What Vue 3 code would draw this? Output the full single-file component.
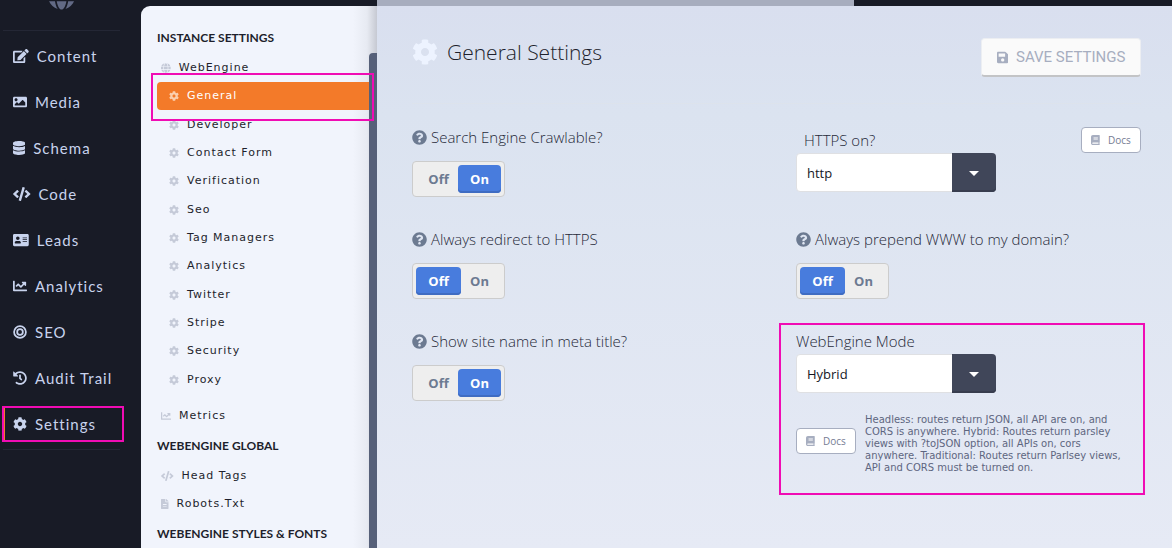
<script setup>
import { ref, h } from 'vue'

const icons = {
  cog: [512, 'M487.4 315.7l-42.6-24.6c4.3-23.2 4.3-47 0-70.2l42.6-24.6c4.9-2.8 7.1-8.6 5.5-14-11.1-35.6-30-67.8-54.7-94.6-3.8-4.1-10-5.1-14.8-2.3L380.8 110c-17.9-15.4-38.5-27.3-60.8-35.1V25.8c0-5.6-3.9-10.5-9.4-11.7-36.7-8.2-74.3-7.8-109.2 0-5.5 1.2-9.4 6.1-9.4 11.7V75c-22.2 7.9-42.8 19.8-60.8 35.1L88.7 85.5c-4.9-2.8-11-1.9-14.8 2.3-24.7 26.7-43.6 58.9-54.7 94.6-1.7 5.4.6 11.2 5.5 14L67.3 221c-4.3 23.2-4.3 47 0 70.2l-42.6 24.6c-4.9 2.8-7.1 8.6-5.5 14 11.1 35.6 30 67.8 54.7 94.6 3.8 4.1 10 5.1 14.8 2.3l42.6-24.6c17.9 15.4 38.5 27.3 60.8 35.1v49.2c0 5.6 3.9 10.5 9.4 11.7 36.7 8.2 74.3 7.8 109.2 0 5.5-1.2 9.4-6.1 9.4-11.7v-49.2c22.2-7.9 42.8-19.8 60.8-35.1l42.6 24.6c4.9 2.8 11 1.9 14.8-2.3 24.7-26.7 43.6-58.9 54.7-94.6 1.5-5.5-.7-11.3-5.6-14.1zM256 336c-44.1 0-80-35.9-80-80s35.9-80 80-80 80 35.9 80 80-35.9 80-80 80z'],
  edit: [576, 'M402.6 83.2l90.2 90.2c3.8 3.8 3.8 10 0 13.8L274.4 405.6l-92.8 10.3c-12.4 1.4-22.9-9.1-21.5-21.5l10.3-92.8L388.8 83.2c3.8-3.8 10-3.8 13.8 0zm162-22.9l-48.8-48.8c-15.2-15.2-39.9-15.2-55.2 0l-35.4 35.4c-3.8 3.8-3.8 10 0 13.8l90.2 90.2c3.8 3.8 10 3.8 13.8 0l35.4-35.4c15.2-15.3 15.2-40 0-55.2zM384 346.2V448H64V128h229.8c3.2 0 6.2-1.3 8.5-3.5l40-40c7.6-7.6 2.2-20.5-8.5-20.5H48C21.5 64 0 85.5 0 112v352c0 26.5 21.5 48 48 48h352c26.5 0 48-21.5 48-48V306.2c0-10.7-12.9-16-20.5-8.5l-40 40c-2.2 2.3-3.5 5.3-3.5 8.5z'],
  image: [512, 'M464 448H48c-26.5 0-48-21.5-48-48V112c0-26.5 21.5-48 48-48h416c26.5 0 48 21.5 48 48v288c0 26.5-21.5 48-48 48zM112 120c-30.9 0-56 25.1-56 56s25.1 56 56 56 56-25.1 56-56-25.1-56-56-56zM64 384h384V272l-87.5-87.5c-4.7-4.7-12.3-4.7-17 0L208 320l-55.5-55.5c-4.7-4.7-12.3-4.7-17 0L64 336v48z'],
  database: [448, 'M448 73.1v45.7C448 159.1 347.7 192 224 192S0 159.1 0 118.9V73.1C0 32.9 100.3 0 224 0s224 32.9 224 73.1zM448 176v102.9C448 319.1 347.7 352 224 352S0 319.1 0 278.9V176c48.1 33.1 136.2 48.6 224 48.6S399.9 209.1 448 176zm0 160v102.9C448 479.1 347.7 512 224 512S0 479.1 0 438.9V336c48.1 33.1 136.2 48.6 224 48.6S399.9 369.1 448 336z'],
  code: [640, 'M278.9 511.5l-61-17.7c-6.4-1.8-10-8.5-8.2-14.9L346.2 8.7c1.8-6.4 8.5-10 14.9-8.2l61 17.7c6.4 1.8 10 8.5 8.2 14.9L293.8 503.3c-1.9 6.4-8.5 10.1-14.9 8.2zm-114-112.2l43.5-46.4c4.6-4.9 4.3-12.7-.8-17.2L117 256l90.6-79.7c5.1-4.5 5.5-12.3.8-17.2l-43.5-46.4c-4.5-4.8-12.1-5.1-17-.5L3.8 247.2c-5.1 4.7-5.1 12.8 0 17.5l144.1 135.1c4.9 4.6 12.5 4.4 17-.5zm327.2.6l144.1-135.1c5.1-4.7 5.1-12.8 0-17.5L492.1 112.1c-4.8-4.5-12.4-4.3-17 .5L431.6 159c-4.6 4.9-4.3 12.7.8 17.2L523 256l-90.6 79.7c-5.1 4.5-5.5 12.3-.8 17.2l43.5 46.4c4.5 4.9 12.1 5.1 17 .6z'],
  card: [576, 'M528 32H48C21.5 32 0 53.5 0 80v352c0 26.5 21.5 48 48 48h480c26.5 0 48-21.5 48-48V80c0-26.5-21.5-48-48-48zm-352 96c35.3 0 64 28.7 64 64s-28.7 64-64 64-64-28.7-64-64 28.7-64 64-64zm112 236.800c0 10.600-10 19.200-22.400 19.200H86.400C74 384 64 375.400 64 364.800v-19.200c0-31.800 30.100-57.600 67.200-57.600h5c12.300 5.100 25.700 8 39.800 8s27.600-2.900 39.800-8h5c37.100 0 67.200 25.800 67.200 57.600v19.200zM512 312c0 4.400-3.600 8-8 8H360c-4.400 0-8-3.600-8-8v-16c0-4.400 3.600-8 8-8h144c4.400 0 8 3.600 8 8v16zm0-64c0 4.400-3.600 8-8 8H360c-4.400 0-8-3.600-8-8v-16c0-4.400 3.600-8 8-8h144c4.400 0 8 3.600 8 8v16zm0-64c0 4.400-3.600 8-8 8H360c-4.400 0-8-3.600-8-8v-16c0-4.400 3.600-8 8-8h144c4.400 0 8 3.600 8 8v16z'],
  chart: [512, 'M496 384H64V80c0-8.800-7.200-16-16-16H16C7.200 64 0 71.200 0 80v336c0 17.700 14.300 32 32 32h464c8.800 0 16-7.200 16-16v-32c0-8.800-7.200-16-16-16zM464 96H345.900c-21.400 0-32.100 25.900-17 41l32.400 32.400L288 242.800l-73.400-73.400c-12.500-12.500-32.800-12.500-45.300 0l-68.700 68.700c-6.200 6.200-6.200 16.400 0 22.600l22.600 22.600c6.300 6.300 16.400 6.300 22.700 0L192 237.300l73.400 73.300c12.500 12.500 32.800 12.500 45.300 0l96-96 32.300 32.400c15.100 15.100 41 4.400 41-17V112c0-8.800-7.200-16-16-16z'],
  bullseye: [512, 'M256 8a248 248 0 1 0 0 496a248 248 0 1 0 0-496zm0 432a184 184 0 1 1 0-368a184 184 0 1 1 0 368zm0-320a136 136 0 1 0 0 272a136 136 0 1 0 0-272zm0 208a72 72 0 1 1 0-144a72 72 0 1 1 0 144z'],
  history: [512, 'M504 255.500c.3 136.600-111.200 248.400-247.800 248.500-59 0-113.200-20.500-155.800-54.900-11.100-8.900-11.900-25.500-1.900-35.600l11.300-11.300c8.600-8.600 22.400-9.600 31.900-2C173.100 425.100 212.800 440 256 440c101.700 0 184-82.300 184-184 0-101.700-82.300-184-184-184-48.800 0-93.100 19-126.100 49.900l50.800 50.800c10.100 10.100 2.900 27.300-11.300 27.300H24c-8.800 0-16-7.200-16-16V38.600c0-14.300 17.200-21.400 27.300-11.300l49.400 49.400C129.200 34.100 189.600 8 256 8c136.800 0 247.700 110.800 248 247.500zm-180.900 78.800l9.800-12.600c8.100-10.500 6.300-25.500-4.200-33.700L288 256.300V152c0-13.300-10.700-24-24-24h-16c-13.300 0-24 10.700-24 24v135.700l65.400 50.900c10.500 8.100 25.500 6.300 33.700-4.300z'],
  globe: [496, 'M336.500 160C322 70.700 287.800 8 248 8s-74 62.700-88.500 152h177zM152 256c0 22.200 1.200 43.500 3.300 64h185.300c2.100-20.500 3.300-41.800 3.300-64s-1.200-43.500-3.300-64H155.300c-2.100 20.500-3.300 41.800-3.300 64zm324.700-96c-28.600-67.900-86.500-120.400-158-141.600 24.400 33.800 41.200 84.700 50 141.600h108zM177.200 18.400C105.800 39.600 47.800 92.100 19.300 160h108c8.700-56.900 25.500-107.800 49.900-141.600zM487.400 192H372.700c2.100 21 3.300 42.500 3.300 64s-1.200 43-3.300 64h114.600c5.500-20.500 8.600-41.800 8.600-64s-3.100-43.500-8.500-64zM120 256c0-21.500 1.200-43 3.300-64H8.600C3.200 212.500 0 233.800 0 256s3.200 43.500 8.600 64h114.600c-2-21-3.200-42.500-3.200-64zm39.500 96c14.500 89.300 48.700 152 88.500 152s74-62.700 88.500-152h-177zm159.300 141.600c71.400-21.200 129.400-73.700 158-141.600h-108c-8.800 56.900-25.600 107.800-50 141.600zM19.300 352c28.600 67.900 86.500 120.400 158 141.600-24.400-33.800-41.200-84.700-50-141.600h-108z'],
  file: [384, 'M224 136V0H24C10.700 0 0 10.700 0 24v464c0 13.300 10.700 24 24 24h336c13.300 0 24-10.700 24-24V160H248c-13.200 0-24-10.800-24-24zm64 236c0 6.600-5.400 12-12 12H108c-6.600 0-12-5.400-12-12v-8c0-6.600 5.400-12 12-12h168c6.600 0 12 5.400 12 12v8zm0-72c0 6.600-5.400 12-12 12H108c-6.600 0-12-5.400-12-12v-32c0-6.600 5.400-12 12-12h168c6.600 0 12 5.400 12 12v32zM384 121.900v6.100H256V0h6.100c6.400 0 12.500 2.500 17 7l97.900 98c4.500 4.500 7 10.600 7 16.900z'],
  save: [448, 'M433.900 129.900l-83.900-83.900A48 48 0 0 0 316.100 32H48C21.500 32 0 53.500 0 80v352c0 26.500 21.500 48 48 48h352c26.500 0 48-21.500 48-48V163.900a48 48 0 0 0-14.100-34zM224 416c-35.300 0-64-28.700-64-64s28.700-64 64-64 64 28.700 64 64-28.700 64-64 64zm96-304.500V212c0 6.600-5.400 12-12 12H76c-6.600 0-12-5.400-12-12V108c0-6.600 5.400-12 12-12h228.500c3.200 0 6.200 1.300 8.500 3.500l3.500 3.500a12 12 0 0 1 3.500 8.500z'],
  book: [448, 'M448 360V24c0-13.300-10.700-24-24-24H96C43 0 0 43 0 96v320c0 53 43 96 96 96h328c13.300 0 24-10.700 24-24v-16c0-7.500-3.500-14.300-8.900-18.700-4.200-15.400-4.200-59.300 0-74.700 5.400-4.300 8.900-11.100 8.900-18.600zM128 134c0-3.300 2.700-6 6-6h212c3.300 0 6 2.700 6 6v20c0 3.300-2.700 6-6 6H134c-3.300 0-6-2.700-6-6v-20zm0 64c0-3.300 2.700-6 6-6h212c3.300 0 6 2.700 6 6v20c0 3.300-2.700 6-6 6H134c-3.300 0-6-2.700-6-6v-20zm253.400 250H96c-17.700 0-32-14.300-32-32 0-17.600 14.400-32 32-32h285.400c-1.900 17.100-1.900 46.900 0 64z'],
  question: [512, 'M504 256c0 137-111 248-248 248S8 393 8 256C8 119.100 119 8 256 8s248 111.100 248 248zM262.700 90c-54.500 0-89.300 23-116.600 63.800-3.500 5.300-2.400 12.400 2.700 16.300l34.700 26.300c5.200 3.900 12.600 3 16.700-2.100 17.900-22.700 30.100-35.800 57.300-35.800 20.400 0 45.700 13.100 45.700 33 0 15-12.400 22.700-32.500 34C247.100 238.500 216 254.900 216 296v4c0 6.600 5.400 12 12 12h56c6.600 0 12-5.400 12-12v-1.300c0-28.500 83.200-29.600 83.200-106.700 0-58-60.200-102-116.500-102zM256 338c-25.400 0-46 20.600-46 46s20.600 46 46 46 46-20.600 46-46-20.600-46-46-46z'],
}

const Icon = (props) => {
  const [w, d] = icons[props.name]
  const s = props.size
  return h('svg', {
    viewBox: `0 0 ${w} 512`, width: (s * w) / 512, height: s,
    fill: 'currentColor', 'aria-hidden': 'true',
  }, [h('path', { d })])
}
Icon.props = ['name', 'size']

const nav = [
  ['edit', 'Content'], ['image', 'Media'], ['database', 'Schema'], ['code', 'Code'],
  ['card', 'Leads'], ['chart', 'Analytics'], ['bullseye', 'SEO'], ['history', 'Audit Trail'],
  ['cog', 'Settings'],
]
const pages = ['General', 'Developer', 'Contact Form', 'Verification', 'Seo', 'Tag Managers',
  'Analytics', 'Twitter', 'Stripe', 'Security', 'Proxy']

const crawl = ref('On')
const redirect = ref('Off')
const www = ref('Off')
const siteName = ref('On')
const protocol = ref('http')
const mode = ref('Hybrid')

const Toggle = (props, { emit }) => h('div', { class: 'toggle', role: 'radiogroup', 'aria-labelledby': props.name },
  ['Off', 'On'].map((v) => h('label', { class: { picked: props.modelValue === v } }, [
    h('input', { type: 'radio', name: props.name, value: v, checked: props.modelValue === v,
      onChange: () => emit('update:modelValue', v) }),
    v,
  ])))
Toggle.props = ['name', 'modelValue']
Toggle.emits = ['update:modelValue']
</script>

<template>
  <div class="app">
    <aside class="sidebar">
      <div class="brand"><Icon name="globe" :size="28" /></div>
      <nav class="main-nav">
        <a v-for="[icon, label] in nav" :key="label" href="#" :class="{ current: label === 'Settings' }">
          <Icon :name="icon" :size="14" />{{ label }}
          <span v-if="label === 'Settings'" class="mark mark-nav"></span>
        </a>
      </nav>
    </aside>

    <section class="tree">
      <h2>Instance Settings</h2>
      <a class="node" href="#"><Icon name="globe" :size="10" />WebEngine</a>
      <div class="pages">
        <a v-for="p in pages" :key="p" class="page" :class="{ active: p === 'General' }" href="#">
          <Icon name="cog" :size="10" />{{ p }}
          <span v-if="p === 'General'" class="mark mark-page"></span>
        </a>
      </div>
      <a class="node metrics" href="#"><Icon name="chart" :size="10" />Metrics</a>
      <h2>WebEngine Global</h2>
      <a class="node" href="#"><Icon name="code" :size="10" />Head Tags</a>
      <a class="node" href="#"><Icon name="file" :size="10" />Robots.Txt</a>
      <h2>WebEngine Styles &amp; Fonts</h2>
      <span class="scrollbar"></span>
    </section>

    <main class="content">
      <div class="progress"><span></span></div>
      <div class="panel">
        <header>
          <h1><Icon name="cog" :size="26" />General Settings</h1>
          <button class="save" type="button"><Icon name="save" :size="13" />SAVE SETTINGS</button>
        </header>
        <div class="fields">
          <div class="field">
            <div id="crawl" class="caption"><Icon name="question" :size="15" />Search Engine Crawlable?</div>
            <Toggle v-model="crawl" name="crawl" />
          </div>
          <div class="field">
            <div class="caption-row">
              <label class="caption" for="protocol">HTTPS on?</label>
              <button class="docs" type="button"><Icon name="book" :size="10" />Docs</button>
            </div>
            <div class="select">
              <select id="protocol" v-model="protocol"><option>http</option><option>https</option></select>
              <span class="arrow"></span>
            </div>
          </div>
          <div class="field">
            <div id="redirect" class="caption"><Icon name="question" :size="15" />Always redirect to HTTPS</div>
            <Toggle v-model="redirect" name="redirect" />
          </div>
          <div class="field">
            <div id="www" class="caption"><Icon name="question" :size="15" />Always prepend WWW to my domain?</div>
            <Toggle v-model="www" name="www" />
          </div>
          <div class="field">
            <div id="sitename" class="caption"><Icon name="question" :size="15" />Show site name in meta title?</div>
            <Toggle v-model="siteName" name="sitename" />
          </div>
          <div class="field mode">
            <label class="caption" for="mode">WebEngine Mode</label>
            <div class="select">
              <select id="mode" v-model="mode"><option>Hybrid</option><option>Headless</option><option>Traditional</option></select>
              <span class="arrow"></span>
            </div>
            <div class="help">
              <button class="docs" type="button"><Icon name="book" :size="10" />Docs</button>
              <p>Headless: routes return JSON, all API are on, and CORS is anywhere. Hybrid: Routes return parsley views with ?toJSON option, all APIs on, cors anywhere. Traditional: Routes return Parlsey views, API and CORS must be turned on.</p>
            </div>
            <span class="mark mark-mode"></span>
          </div>
        </div>
      </div>
    </main>
  </div>
</template>

<style>
body { margin: 0; background: #181b26; }
</style>

<style scoped>
.app {
  display: flex;
  height: 100vh;
  overflow: hidden;
  background: #181b26;
  font-family: "Open Sans", "Noto Sans", sans-serif;
}
.app, .app :deep(*) { box-sizing: border-box; }
.app :deep(svg) { flex: none; }
a { color: inherit; text-decoration: none; }
h1, h2, p { margin: 0; }
button, select { font-family: inherit; }

.mark { position: absolute; border: 2px solid #f00cb4; pointer-events: none; z-index: 2; }

.sidebar { flex: 0 0 141px; padding: 0 21px 0 3px; }
.brand {
  height: 31px;
  display: flex;
  align-items: flex-end;
  justify-content: center;
  padding: 0 0 20px;
  border-bottom: 1px solid #242735;
  color: #626a85;
}
.main-nav { padding: 2px 0; border-bottom: 1px solid #242735; }
.main-nav a {
  position: relative;
  display: flex;
  align-items: center;
  gap: 8px;
  height: 46px;
  padding-left: 10px;
  color: #c8d3ed;
  font: 15px/20px Lato, sans-serif;
  letter-spacing: 1px;
}
.current::before { content: ""; position: absolute; left: 1px; top: 6px; bottom: 6px; width: 1px; background: #f37a29; }
.mark-nav { left: -1px; right: -4px; top: 5px; bottom: 5px; }

.tree {
  position: relative;
  flex: 0 0 236px;
  margin-top: 6px;
  padding: 22px 8px 0 16px;
  border-radius: 9px 0 0 0;
  background: linear-gradient(to right, #f1f4fc 212px, #e7eaf2 226px, #c6c9d2);
  color: #1e1f2c;
  font: 11px/20px "DejaVu Sans", sans-serif;
  letter-spacing: 1px;
}
.tree h2 {
  font: 700 12px/20px Lato, sans-serif;
  letter-spacing: 0;
  text-transform: uppercase;
  white-space: nowrap;
}
.tree a { display: flex; align-items: center; gap: 8px; }
.tree a :deep(svg) { color: #c5cad8; }
.node { height: 28px; padding-left: 4px; }
h2 + .node { margin-top: 6px; }
.pages { display: grid; grid-auto-rows: 1fr; height: 312px; }
.page { position: relative; padding-left: 12px; }
.tree .active { border-radius: 4px 0 0 4px; background: #f37a29; color: #fff; }
.tree .active :deep(svg) { color: #fbcfae; }
.mark-page { left: -6px; right: -5px; top: -9px; bottom: -11px; }
.metrics { margin: 8px 0 6px; }
.tree .node + h2 { margin-top: 6px; }
.scrollbar { position: absolute; right: 0; top: 47px; bottom: 0; width: 8px; border-radius: 4px 0 0 0; background: #566079; }

.content { flex: 1; min-width: 0; display: flex; flex-direction: column; }
.progress { flex: 0 0 6px; }
.progress span { display: block; width: 60%; height: 6px; background: #a7adbe; }
.panel { flex: 1; padding: 32px 31px 0 35px; background: linear-gradient(#d9dfef, #dbe3f0 20%, #e6eaf5); color: #262939; }
header { display: flex; align-items: flex-start; justify-content: space-between; height: 66px; border-bottom: 1px solid #dde3ec; }
h1 { display: flex; align-items: center; gap: 9px; font-size: 21px; line-height: 28px; font-weight: 300; color: #1e1f2c; }
h1 :deep(svg) { color: #edf3ff; }
.save {
  display: flex;
  align-items: center;
  justify-content: center;
  gap: 8px;
  width: 160px;
  height: 39px;
  border: 1px solid #eceef2;
  border-bottom: 2px solid #c3c4c6;
  border-radius: 4px;
  background: #fafafa;
  color: #a7aec0;
  font: 15px/20px Roboto, sans-serif;
}

.fields { display: grid; grid-template-columns: 1fr 1fr; column-gap: 39px; grid-auto-rows: 102px; padding-top: 23px; }
.field { position: relative; }
.caption {
  display: flex;
  align-items: center;
  gap: 4px;
  height: 20px;
  font: 300 15px/20px "Open Sans", sans-serif;
  white-space: nowrap;
}
.caption :deep(svg) { color: #6c7a91; }
.caption-row { display: flex; justify-content: space-between; height: 26px; align-items: center; padding-left: 8px; }
.field :deep(.toggle) {
  display: inline-flex;
  margin-top: 14px;
  height: 36px;
  padding: 3px;
  border: 1px solid #ccc;
  border-radius: 4px;
  background: #eee;
}
.field :deep(.toggle label) {
  display: flex;
  align-items: center;
  justify-content: center;
  width: 43px;
  border-radius: 4px;
  color: #6c7a91;
  font-size: 13px;
  font-weight: 700;
}
.field :deep(.toggle label:first-child) { width: 45px; margin-right: -3px; }
.field :deep(.toggle .picked) { position: relative; background: #487cdd; color: #fff; box-shadow: inset 0 -2px 0 #3f6cc2; }
.field :deep(.toggle input) { position: absolute; opacity: 0; width: 1px; height: 1px; margin: 0; }
.select { position: relative; width: 200px; height: 39px; }
.select select {
  width: 100%;
  height: 100%;
  padding: 0 54px 0 10px;
  appearance: none;
  border: 1px solid #dfe0e3;
  border-radius: 4px;
  background: #fff;
  color: #15171f;
  font-size: 13px;
}
.arrow {
  position: absolute;
  right: 0;
  top: 0;
  bottom: 0;
  width: 44px;
  display: flex;
  align-items: center;
  justify-content: center;
  border-radius: 0 4px 4px 0;
  background: #404659;
  box-shadow: inset 0 -2px 0 #383d4e;
  pointer-events: none;
}
.arrow::after { content: ""; margin-top: 2px; border: 5px solid transparent; border-top-color: #fff; border-bottom-width: 0; }
.docs {
  display: flex;
  align-items: center;
  justify-content: center;
  gap: 8px;
  flex: none;
  width: 60px;
  height: 26px;
  padding: 0;
  border: 1px solid #a7aec0;
  border-radius: 4px;
  background: #fff;
  color: #757c93;
  font-size: 10px;
}
.docs :deep(svg) { color: #a7aec0; }
.mode .select { margin-top: 3px; }
.help { display: flex; align-items: flex-start; gap: 9px; margin-top: 21px; }
.help .docs { margin-top: 14px; }
.help p { font: 10px/12px "DejaVu Sans", sans-serif; color: #5e6680; max-width: 264px; }
.mark-mode { left: -17px; right: -4px; top: -8px; height: 172px; }
</style>
